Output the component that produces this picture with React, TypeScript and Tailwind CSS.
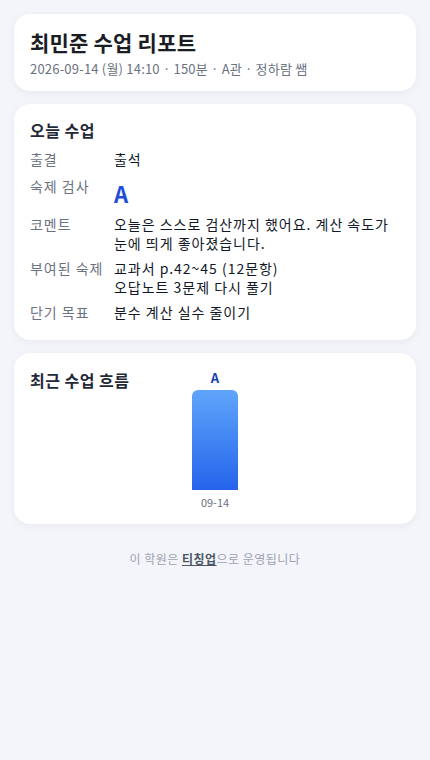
import React from 'react';

const font = { fontFamily: '"Noto Sans CJK KR", "Noto Sans", sans-serif' };

interface Row {
  label: string;
  value: React.ReactNode;
  className?: string;
}

const rows: Row[] = [
  { label: '출결', value: '출석', className: 'mb-[2px]' },
  { label: '숙제 검사', value: <span className="text-[22px] font-bold leading-[32px] tracking-normal text-[#1d4ed8]">A</span> },
  { label: '코멘트', value: '오늘은 스스로 검산까지 했어요. 계산 속도가 눈에 띄게 좋아졌습니다.' },
  { label: '부여된 숙제', value: (<><div>교과서 p.42~45 (12문항)</div><div>오답노트 3문제 다시 풀기</div></>) },
  { label: '단기 목표', value: '분수 계산 실수 줄이기' },
];

const history = [{ date: '09-14', grade: 'A', height: 100 }];

function Card({ children, className = '' }: { children: React.ReactNode; className?: string }) {
  return (
    <div className={`rounded-2xl bg-white px-4 shadow-[0_2px_8px_rgba(15,23,42,0.05)] ${className}`}>
      {children}
    </div>
  );
}

export default function App() {
  return (
    <div className="min-h-[760px] bg-[#f3f5fa] px-[14px] pt-[14px]" style={font}>
      <div className="flex flex-col gap-[13px]">
        {/* Header */}
        <Card className="pt-[14px] pb-[12px]">
          <h1 className="text-[21px] font-bold leading-7 tracking-[0.01em] text-[#1a1d24]">최민준 수업 리포트</h1>
          <p className="mt-[3px] text-[13px] leading-5 tracking-[0.2px] text-[#6b7280]">2026-09-14 (월) 14:10 · 150분 · A관 · 정하람 쌤</p>
        </Card>

        {/* Today */}
        <Card className="pt-[14px] pb-[18px]">
          <h2 className="text-[16px] font-bold leading-6 tracking-[0.03em] text-[#1f2937]">오늘 수업</h2>
          <div className="mt-[8px] flex flex-col gap-[6px]">
            {rows.map(r => (
              <div key={r.label} className={`flex text-[14px] leading-[19px] tracking-[0.07em] ${r.className ?? ''}`}>
                <div className="w-[84px] shrink-0 text-[#6b7280]">{r.label}</div>
                <div className="flex-1 text-[#111827]">{r.value}</div>
              </div>
            ))}
          </div>
        </Card>

        {/* Recent */}
        <Card className="pt-[15px] pb-[14px]">
          <div className="grid grid-cols-[1fr_auto_1fr]">
            <h2 className="text-[16px] font-bold leading-6 tracking-[0.03em] text-[#1f2937]">최근 수업 흐름</h2>
            <div className="flex gap-4">
              {history.map(h => (
                <div key={h.date} className="flex w-[46px] flex-col items-center">
                  <div className="text-[13px] font-bold leading-5 text-[#1e40af]">{h.grade}</div>
                  <div
                    className="mt-[2px] w-full rounded-t-md bg-gradient-to-b from-[#60a5fa] to-[#2563eb]"
                    style={{ height: h.height }}
                  />
                  <div className="mt-[4px] text-[11px] leading-4 text-[#6b7280]">{h.date}</div>
                </div>
              ))}
            </div>
            <div />
          </div>
        </Card>
      </div>

      <p className="mt-[25px] text-center text-[12px] leading-5 tracking-[0.04em] text-[#9ca3af]">
        이 학원은 <span className="font-bold text-[#4b5563] underline">티칭업</span>으로 운영됩니다
      </p>
    </div>
  );
}
